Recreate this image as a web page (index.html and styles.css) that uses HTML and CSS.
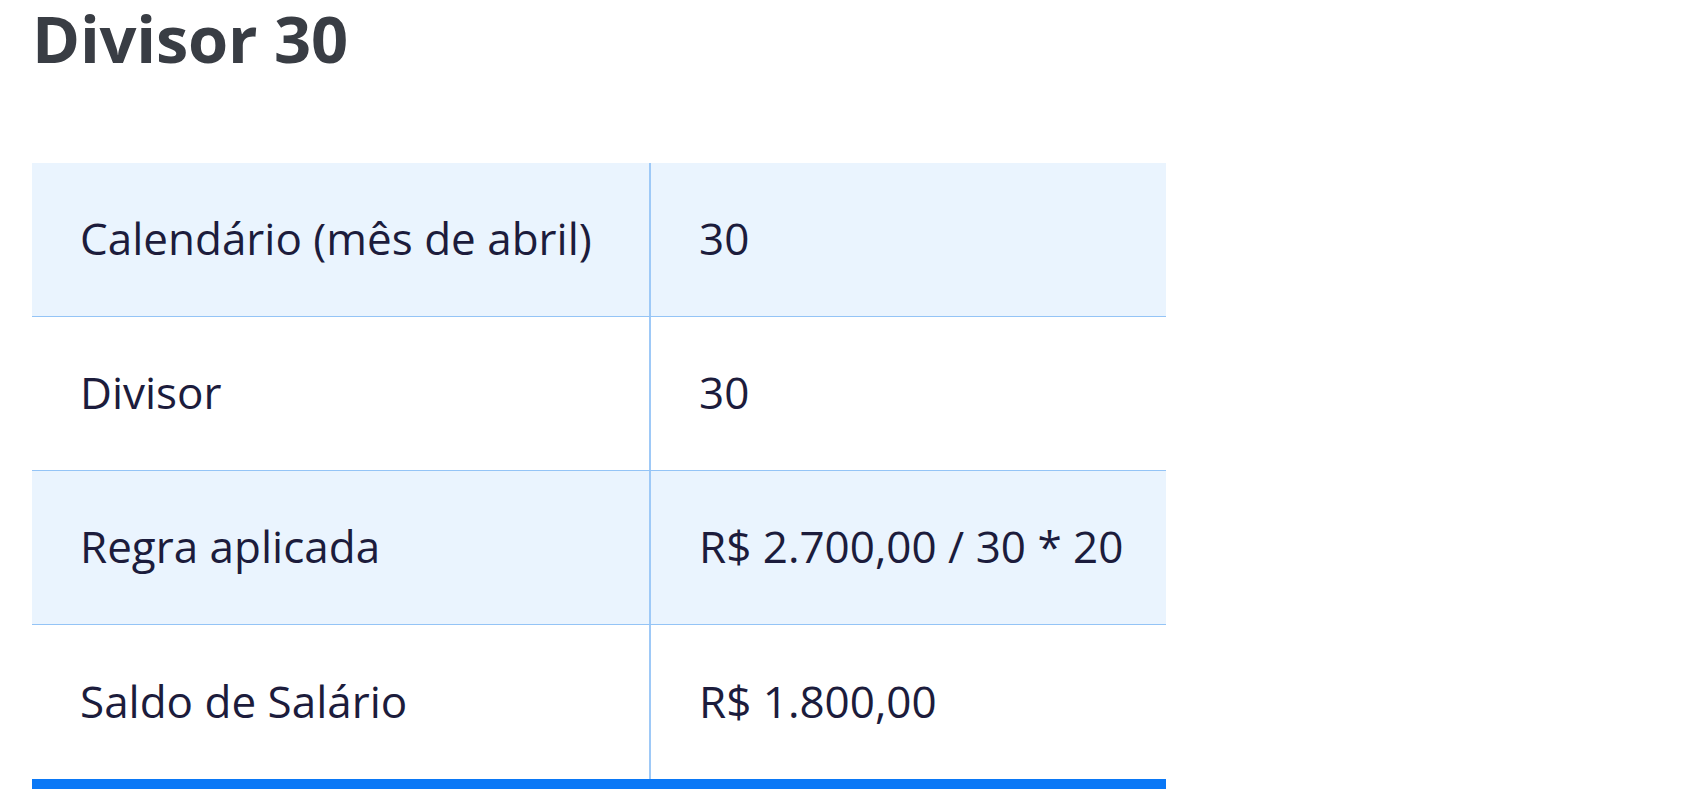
FILE: index.html
```html
<!DOCTYPE html>
<html lang="pt-BR">
<head>
<meta charset="utf-8">
<title>Divisor 30</title>
<link rel="stylesheet" href="styles.css">
</head>
<body>
  <main class="page">
    <h1 class="title">Divisor 30</h1>
    <div class="table" role="table">
      <div class="row alt" role="row">
        <div class="cell label" role="cell">Calendário (mês de abril)</div>
        <div class="cell value" role="cell">30</div>
      </div>
      <div class="row" role="row">
        <div class="cell label" role="cell">Divisor</div>
        <div class="cell value" role="cell">30</div>
      </div>
      <div class="row alt" role="row">
        <div class="cell label" role="cell">Regra aplicada</div>
        <div class="cell value" role="cell">R$ 2.700,00 / 30 * 20</div>
      </div>
      <div class="row last" role="row">
        <div class="cell label" role="cell">Saldo de Salário</div>
        <div class="cell value" role="cell">R$ 1.800,00</div>
      </div>
    </div>
  </main>
</body>
</html>
```

FILE: styles.css
```css
* {
  box-sizing: border-box;
}

html, body {
  margin: 0;
  padding: 0;
  background: #ffffff;
}

.page {
  padding: 0 0 0 32px;
  font-family: "Open Sans", "Liberation Sans", sans-serif;
}

.title {
  margin: 0 0 87px 0;
  font-size: 65px;
  line-height: 76px;
  font-weight: 700;
  color: #393d44;
  letter-spacing: -0.2px;
}

.table {
  width: 1134px;
  border-bottom: 10px solid #0a78f6;
}

.row {
  display: grid;
  grid-template-columns: 619px 1fr;
  height: 154px;
  border-bottom: 1px solid #94c4f6;
  background: #ffffff;
}

.row.alt {
  background: #eaf4fe;
}

.row.last {
  border-bottom: none;
}

.cell {
  display: flex;
  align-items: center;
  padding-bottom: 3px;
  font-size: 44px;
  color: #1c1c3c;
  white-space: nowrap;
}

.label {
  padding-left: 48px;
  border-right: 2px solid #9ec9f7;
}

.value {
  padding-left: 48px;
}
```
